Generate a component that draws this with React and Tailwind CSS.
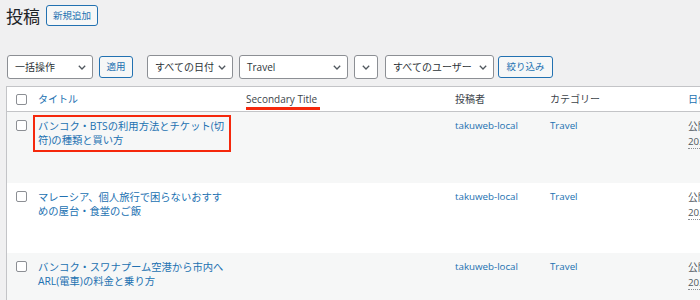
import React from "react";

function Chevron() {
  return (
    <svg width="8" height="5" viewBox="0 0 8 5" className="shrink-0">
      <polyline points="0.8,0.8 4,4 7.2,0.8" fill="none" stroke="#50575e" strokeWidth="1.3" />
    </svg>
  );
}

function Select({ w, label, pl = "pl-[7px]", pr = "pr-[6px]" }) {
  return (
    <div className={`${w} h-[24px] bg-white border border-[#8c8f94] rounded-[3px] flex items-center justify-between ${pl} ${pr} text-[10px] text-[#2c3338] leading-none`}>
      <span>{label}</span>
      <Chevron />
    </div>
  );
}

function Btn({ w, label, h = "h-[22px]" }) {
  return (
    <div className={`${w} ${h} bg-[#f6f7f7] border border-[#2271b1] rounded-[3px] flex items-center justify-center text-[9.5px] text-[#2271b1] leading-none`}>
      {label}
    </div>
  );
}

function Check() {
  return <div className="w-[11px] h-[11px] bg-white border border-[#8c8f94] rounded-[2px]" />;
}

const rows = [
  { lines: ["バンコク・BTSの利用方法とチケット(切", "符)の種類と買い方"], boxed: true, bg: "bg-[#f6f7f7]", h: "h-[71px]" },
  { lines: ["マレーシア、個人旅行で困らないおすす", "めの屋台・食堂のご飯"], boxed: false, bg: "bg-white", h: "h-[70px]" },
  { lines: ["バンコク・スワナプーム空港から市内へ", "ARL(電車)の料金と乗り方"], boxed: false, bg: "bg-[#f6f7f7]", h: "h-[70px]" },
];

export default function App() {
  return (
    <div className="w-[700px] h-[300px] overflow-hidden bg-[#f0f0f1] font-['Open_Sans','Noto_Sans_CJK_JP',sans-serif]">
      <div className="flex items-center gap-[6px] pl-[6px] pt-[5px] h-[26px]">
        <h1 className="text-[17px] leading-none text-[#1d2327] font-normal font-['Noto_Sans_CJK_JP',sans-serif]">投稿</h1>
        <Btn w="w-[52px]" h="h-[21px]" label="新規追加" />
      </div>

      <div className="flex items-center pl-[7px] mt-[29px] h-[24px]">
        <Select w="w-[86px]" label="一括操作" />
        <div className="ml-[6px]"><Btn w="w-[34px]" label="適用" /></div>
        <div className="ml-[14px]"><Select w="w-[86px]" label="すべての日付" /></div>
        <div className="ml-[6px]"><Select w="w-[109px]" label="Travel" /></div>
        <div className="ml-[6px]"><Select w="w-[24px]" label="" pl="pl-[7px]" pr="pr-[7px]" /></div>
        <div className="ml-[7px]"><Select w="w-[109px]" label="すべてのユーザー" /></div>
        <div className="ml-[4px]"><Btn w="w-[55px]" label="絞り込み" /></div>
      </div>

      <div className="ml-[6px] mt-[7px] w-[720px] border border-[#c3c4c7] bg-white">
        <div className="grid grid-cols-[24px_208px_209px_95px_138px_200px] h-[25px] items-center border-b border-[#c3c4c7] text-[10px] leading-[14px]">
          <div className="pl-[9px]"><Check /></div>
          <div className="pl-[7px] text-[#2271b1]">タイトル</div>
          <div className="pl-[7px]">
            <span className="inline-block text-[#3c434a] border-b-[3px] border-[#f5280c] pr-[3px] pb-[1px] translate-y-[2px]">Secondary Title</span>
          </div>
          <div className="pl-[7px] text-[#3c434a]">投稿者</div>
          <div className="pl-[7px] text-[#3c434a]">カテゴリー</div>
          <div className="pl-[7px] text-[#2271b1]">日付</div>
        </div>

        {rows.map((r, i) => (
          <div key={i} className={`grid grid-cols-[24px_208px_209px_95px_138px_200px] items-start pt-[7px] ${r.bg} ${r.h}`}>
            <div className="pl-[9px] pt-[1px]"><Check /></div>
            <div className="pl-[7px]">
              {r.boxed ? (
                <div className="-ml-[5px] -mt-[4px] w-[198px] border-2 border-[#f5280c] pl-[3px] pt-[2px] pb-[3px] text-[10.3px] leading-[14px] text-[#2271b1]">
                  {r.lines[0]}<br />{r.lines[1]}
                </div>
              ) : (
                <div className="text-[10.3px] leading-[14px] text-[#2271b1]">
                  {r.lines[0]}<br />{r.lines[1]}
                </div>
              )}
            </div>
            <div />
            <div className="pl-[7px] text-[9.75px] leading-[14px] text-[#2271b1]">takuweb-local</div>
            <div className="pl-[7px] text-[9.75px] leading-[14px] text-[#2271b1]">Travel</div>
            <div className="pl-[7px] text-[9.75px] leading-[15px] text-[#50575e]">
              公開済み<br /><span className="border-b border-dotted border-[#8c8f94]">2020/01/15</span>
            </div>
          </div>
        ))}
      </div>
    </div>
  );
}
